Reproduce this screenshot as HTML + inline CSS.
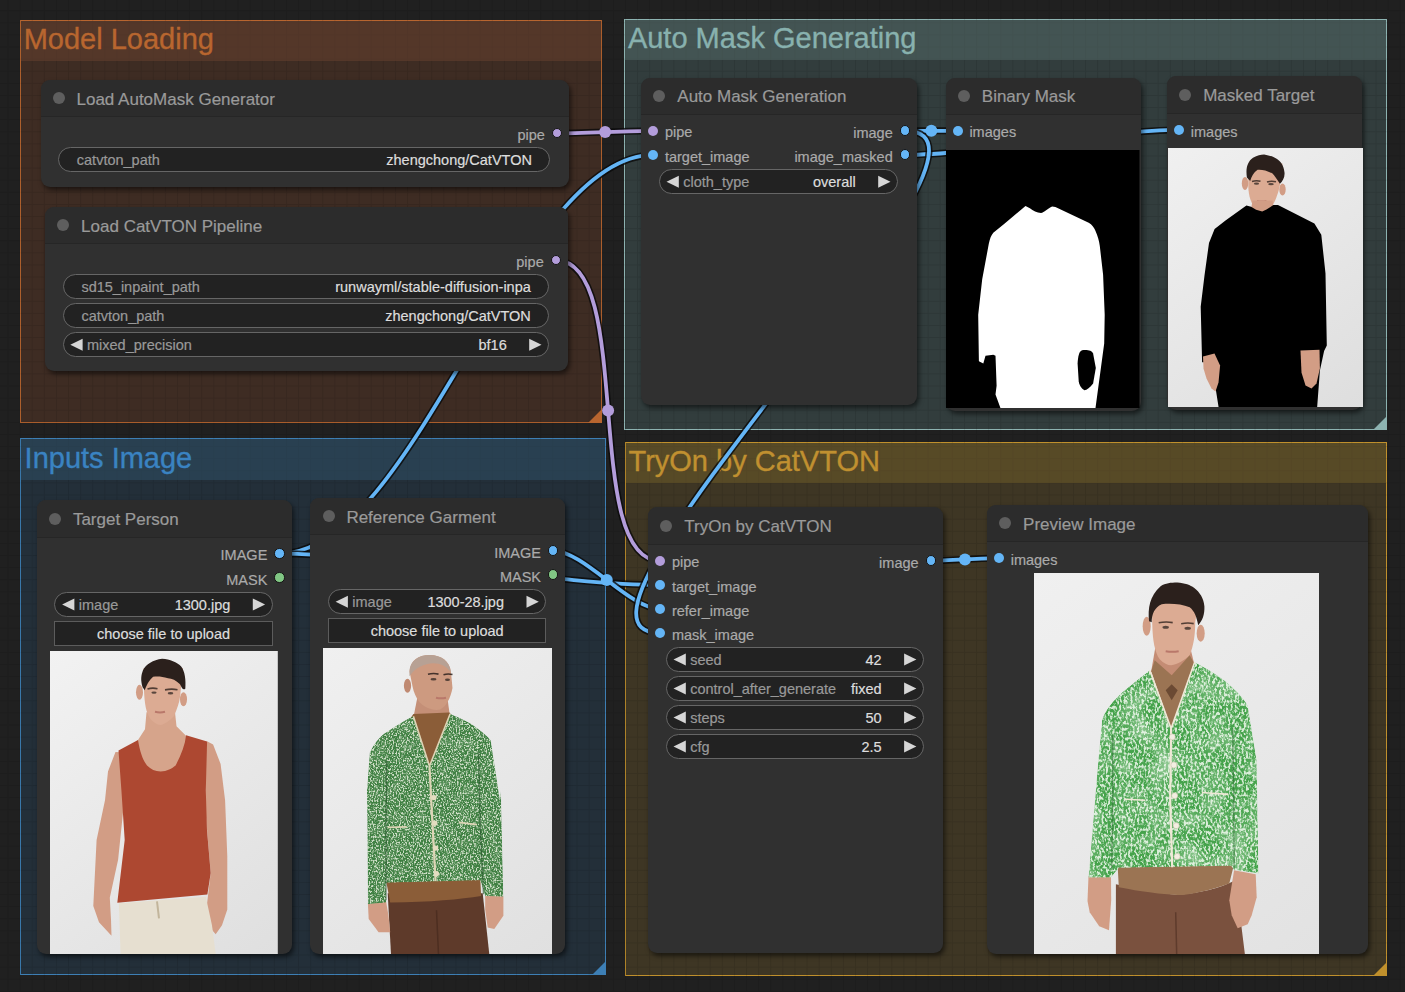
<!DOCTYPE html><html><head><meta charset="utf-8"><style>
html,body{margin:0;padding:0}
body{width:1405px;height:992px;overflow:hidden;background:#202020;position:relative;font-family:"Liberation Sans",sans-serif}
.t{position:absolute;white-space:nowrap;line-height:1}
.abs{position:absolute}
.grp{position:absolute;box-sizing:border-box}
.node{position:absolute;border-radius:9px;background:#303030;box-shadow:2px 3px 5px rgba(0,0,0,0.55);overflow:hidden}
.tbar{position:absolute;left:0;right:0;top:0;background:#2c2c2c;border-bottom:1px solid #262626}
.dot{position:absolute;border-radius:50%}
.w{position:absolute;box-sizing:border-box;background:#222;border:1px solid #666;border-radius:13px}
.btn{position:absolute;box-sizing:border-box;background:#222;border:1px solid #5c5c5c}

</style></head><body>
<div class="grp" style="left:20px;top:20px;width:582px;height:403px;border:1px solid #b8652f;background:#3e2c23"></div>
<div class="abs" style="left:21px;top:21px;width:580px;height:40px;background:#54382a"></div>
<div class="grp" style="left:624px;top:19px;width:763px;height:411px;border:1px solid #8db3b1;background:#323d3d"></div>
<div class="abs" style="left:625px;top:20px;width:761px;height:40px;background:#445453"></div>
<div class="grp" style="left:20px;top:438px;width:586px;height:537px;border:1px solid #3d7fb5;background:#232f39"></div>
<div class="abs" style="left:21px;top:439px;width:584px;height:41px;background:#2a4151"></div>
<div class="grp" style="left:625px;top:442px;width:762px;height:534px;border:1px solid #c0902c;background:#3e3624"></div>
<div class="abs" style="left:626px;top:443px;width:760px;height:40px;background:#574a27"></div>
<svg class="abs" style="left:0;top:0" width="1405" height="992"><defs><pattern id="g" patternUnits="userSpaceOnUse" x="7.5" y="10.2" width="12.107" height="12.107"><rect x="0" y="0" width="1" height="12.107" fill="rgba(0,0,0,0.10)"/><rect x="1" y="0" width="11.107" height="1" fill="rgba(0,0,0,0.10)"/></pattern></defs><rect width="1405" height="992" fill="url(#g)"/></svg>
<div class="abs" style="left:21px;top:21px;width:580px;height:40px;background:#54382a;opacity:0.65"></div>
<svg class="abs" style="left:588px;top:409px" width="14" height="14"><polygon points="14,0 14,14 0,14" fill="#b8652f"/></svg>
<div class="t" style="left:23.70px;top:24.95px;font-size:29px;color:#b8662f;-webkit-text-stroke:0.35px #b8662f">Model Loading</div>
<div class="abs" style="left:625px;top:20px;width:761px;height:40px;background:#445453;opacity:0.65"></div>
<svg class="abs" style="left:1373px;top:416px" width="14" height="14"><polygon points="14,0 14,14 0,14" fill="#8db3b1"/></svg>
<div class="t" style="left:627.90px;top:24.05px;font-size:29px;color:#88b1ae;-webkit-text-stroke:0.35px #88b1ae">Auto Mask Generating</div>
<div class="abs" style="left:21px;top:439px;width:584px;height:41px;background:#2a4151;opacity:0.65"></div>
<svg class="abs" style="left:592px;top:961px" width="14" height="14"><polygon points="14,0 14,14 0,14" fill="#3d7fb5"/></svg>
<div class="t" style="left:24.60px;top:444.25px;font-size:29px;color:#3a83c2;-webkit-text-stroke:0.35px #3a83c2">Inputs Image</div>
<div class="abs" style="left:626px;top:443px;width:760px;height:40px;background:#574a27;opacity:0.65"></div>
<svg class="abs" style="left:1373px;top:962px" width="14" height="14"><polygon points="14,0 14,14 0,14" fill="#c0902c"/></svg>
<div class="t" style="left:628.50px;top:446.95px;font-size:29px;color:#c09030;-webkit-text-stroke:0.35px #c09030">TryOn by CatVTON</div>
<svg class="abs" style="left:0;top:0" width="1405" height="992"><path d="M557.20,133.40 C581.18,133.40 629.12,130.80 653.10,130.80" fill="none" stroke="rgba(10,10,10,0.8)" stroke-width="7"/><path d="M557.20,133.40 C581.18,133.40 629.12,130.80 653.10,130.80" fill="none" stroke="#b39ddb" stroke-width="3.8"/><path d="M556.10,260.40 C635.57,260.40 580.63,560.80 660.10,560.80" fill="none" stroke="rgba(10,10,10,0.8)" stroke-width="7"/><path d="M556.10,260.40 C635.57,260.40 580.63,560.80 660.10,560.80" fill="none" stroke="#b39ddb" stroke-width="3.8"/><path d="M279.70,553.70 C416.28,553.70 516.52,154.90 653.10,154.90" fill="none" stroke="rgba(10,10,10,0.8)" stroke-width="7"/><path d="M279.70,553.70 C416.28,553.70 516.52,154.90 653.10,154.90" fill="none" stroke="#64b5f6" stroke-width="3.8"/><path d="M279.70,553.70 C375.12,553.70 564.68,584.90 660.10,584.90" fill="none" stroke="rgba(10,10,10,0.8)" stroke-width="7"/><path d="M279.70,553.70 C375.12,553.70 564.68,584.90 660.10,584.90" fill="none" stroke="#64b5f6" stroke-width="3.8"/><path d="M553.40,550.80 C583.79,550.80 629.71,609.00 660.10,609.00" fill="none" stroke="rgba(10,10,10,0.8)" stroke-width="7"/><path d="M553.40,550.80 C583.79,550.80 629.71,609.00 660.10,609.00" fill="none" stroke="#64b5f6" stroke-width="3.8"/><path d="M905.10,130.80 C918.23,130.80 944.47,130.80 957.60,130.80" fill="none" stroke="rgba(10,10,10,0.8)" stroke-width="7"/><path d="M905.10,130.80 C918.23,130.80 944.47,130.80 957.60,130.80" fill="none" stroke="#64b5f6" stroke-width="3.8"/><path d="M905.10,154.90 C973.86,154.90 1110.24,129.90 1179.00,129.90" fill="none" stroke="rgba(10,10,10,0.8)" stroke-width="7"/><path d="M905.10,154.90 C973.86,154.90 1110.24,129.90 1179.00,129.90" fill="none" stroke="#64b5f6" stroke-width="3.8"/><path d="M905.10,130.80 C1044.82,130.80 520.38,633.10 660.10,633.10" fill="none" stroke="rgba(10,10,10,0.8)" stroke-width="7"/><path d="M905.10,130.80 C1044.82,130.80 520.38,633.10 660.10,633.10" fill="none" stroke="#64b5f6" stroke-width="3.8"/><path d="M931.00,560.80 C947.99,560.80 981.91,558.10 998.90,558.10" fill="none" stroke="rgba(10,10,10,0.8)" stroke-width="7"/><path d="M931.00,560.80 C947.99,560.80 981.91,558.10 998.90,558.10" fill="none" stroke="#64b5f6" stroke-width="3.8"/><circle cx="605.15" cy="132.10" r="6" fill="#b39ddb"/><circle cx="608.10" cy="410.60" r="6" fill="#b39ddb"/><circle cx="466.40" cy="354.30" r="6" fill="#64b5f6"/><circle cx="469.90" cy="569.30" r="6" fill="#64b5f6"/><circle cx="606.75" cy="579.90" r="6" fill="#64b5f6"/><circle cx="931.35" cy="130.80" r="6" fill="#64b5f6"/><circle cx="1042.05" cy="142.40" r="6" fill="#64b5f6"/><circle cx="782.60" cy="381.95" r="6" fill="#64b5f6"/><circle cx="964.95" cy="559.45" r="6" fill="#64b5f6"/></svg>
<div class="node" style="left:40.50px;top:80.10px;width:528.80px;height:106.50px"><div class="tbar" style="height:36.30px"></div><div class="dot" style="left:12.20px;top:12.40px;width:12px;height:12px;background:#5e5e5e"></div></div><div class="t" style="left:76.50px;top:90.91px;font-size:17px;color:#9a9a9a;-webkit-text-stroke:0.2px #9a9a9a">Load AutoMask Generator</div>
<div class="dot" style="left:551.70px;top:127.90px;width:8.4px;height:8.4px;background:#b39ddb;border:1.3px solid #151515"></div><div class="t" style="right:860.20px;top:128.13px;font-size:14.5px;color:#aaaaaa;-webkit-text-stroke:0.2px #aaaaaa">pipe</div>
<div class="w" style="left:57.90px;top:147.10px;width:492.40px;height:24.6px"></div><div class="t" style="left:76.80px;top:152.53px;font-size:14.5px;color:#999999;-webkit-text-stroke:0.2px #999999">catvton_path</div><div class="t" style="right:873.10px;top:152.53px;font-size:14.5px;color:#dddddd;-webkit-text-stroke:0.2px #dddddd">zhengchong/CatVTON</div>
<div class="node" style="left:45.10px;top:207.10px;width:523.10px;height:163.90px"><div class="tbar" style="height:36.30px"></div><div class="dot" style="left:12.20px;top:12.40px;width:12px;height:12px;background:#5e5e5e"></div></div><div class="t" style="left:81.10px;top:217.91px;font-size:17px;color:#9a9a9a;-webkit-text-stroke:0.2px #9a9a9a">Load CatVTON Pipeline</div>
<div class="dot" style="left:550.60px;top:254.90px;width:8.4px;height:8.4px;background:#b39ddb;border:1.3px solid #151515"></div><div class="t" style="right:861.30px;top:255.13px;font-size:14.5px;color:#aaaaaa;-webkit-text-stroke:0.2px #aaaaaa">pipe</div>
<div class="w" style="left:62.50px;top:274.30px;width:486.70px;height:24.6px"></div><div class="t" style="left:81.40px;top:279.73px;font-size:14.5px;color:#999999;-webkit-text-stroke:0.2px #999999">sd15_inpaint_path</div><div class="t" style="right:874.20px;top:279.73px;font-size:14.5px;color:#dddddd;-webkit-text-stroke:0.2px #dddddd">runwayml/stable-diffusion-inpa</div>
<div class="w" style="left:62.50px;top:303.30px;width:486.70px;height:24.6px"></div><div class="t" style="left:81.40px;top:308.73px;font-size:14.5px;color:#999999;-webkit-text-stroke:0.2px #999999">catvton_path</div><div class="t" style="right:874.20px;top:308.73px;font-size:14.5px;color:#dddddd;-webkit-text-stroke:0.2px #dddddd">zhengchong/CatVTON</div>
<div class="w" style="left:62.50px;top:332.40px;width:486.70px;height:24.6px"></div><svg class="abs" style="left:0;top:0;overflow:visible" width="1" height="1"><polygon points="82.60,338.70 70.30,344.70 82.60,350.70" fill="#d6d6d6"/><polygon points="529.20,338.70 541.50,344.70 529.20,350.70" fill="#d6d6d6"/></svg><div class="t" style="left:87.00px;top:337.83px;font-size:14.5px;color:#999999;-webkit-text-stroke:0.2px #999999">mixed_precision</div><div class="t" style="right:898.30px;top:337.83px;font-size:14.5px;color:#dddddd;-webkit-text-stroke:0.2px #dddddd">bf16</div>
<div class="node" style="left:641.30px;top:77.60px;width:275.90px;height:327.40px"><div class="tbar" style="height:36.20px"></div><div class="dot" style="left:12.20px;top:12.35px;width:12px;height:12px;background:#5e5e5e"></div></div><div class="t" style="left:677.30px;top:88.41px;font-size:17px;color:#9a9a9a;-webkit-text-stroke:0.2px #9a9a9a">Auto Mask Generation</div>
<div class="dot" style="left:648.10px;top:125.80px;width:10px;height:10px;background:#b39ddb"></div><div class="t" style="left:664.90px;top:125.43px;font-size:14.5px;color:#aaaaaa;-webkit-text-stroke:0.2px #aaaaaa">pipe</div>
<div class="dot" style="left:648.10px;top:149.90px;width:10px;height:10px;background:#64b5f6"></div><div class="t" style="left:664.90px;top:149.53px;font-size:14.5px;color:#aaaaaa;-webkit-text-stroke:0.2px #aaaaaa">target_image</div>
<div class="dot" style="left:899.60px;top:125.30px;width:8.4px;height:8.4px;background:#64b5f6;border:1.3px solid #151515"></div><div class="t" style="right:512.30px;top:125.53px;font-size:14.5px;color:#aaaaaa;-webkit-text-stroke:0.2px #aaaaaa">image</div>
<div class="dot" style="left:899.60px;top:149.40px;width:8.4px;height:8.4px;background:#64b5f6;border:1.3px solid #151515"></div><div class="t" style="right:512.30px;top:149.63px;font-size:14.5px;color:#aaaaaa;-webkit-text-stroke:0.2px #aaaaaa">image_masked</div>
<div class="w" style="left:658.70px;top:169.40px;width:239.50px;height:24.6px"></div><svg class="abs" style="left:0;top:0;overflow:visible" width="1" height="1"><polygon points="678.80,175.70 666.50,181.70 678.80,187.70" fill="#d6d6d6"/><polygon points="878.20,175.70 890.50,181.70 878.20,187.70" fill="#d6d6d6"/></svg><div class="t" style="left:683.20px;top:174.83px;font-size:14.5px;color:#999999;-webkit-text-stroke:0.2px #999999">cloth_type</div><div class="t" style="right:549.30px;top:174.83px;font-size:14.5px;color:#dddddd;-webkit-text-stroke:0.2px #dddddd">overall</div>
<div class="node" style="left:945.80px;top:77.60px;width:195.20px;height:333.90px"><div class="tbar" style="height:36.20px"></div><div class="dot" style="left:12.20px;top:12.35px;width:12px;height:12px;background:#5e5e5e"></div></div><div class="t" style="left:981.80px;top:88.41px;font-size:17px;color:#9a9a9a;-webkit-text-stroke:0.2px #9a9a9a">Binary Mask</div>
<div class="dot" style="left:952.60px;top:125.80px;width:10px;height:10px;background:#64b5f6"></div><div class="t" style="left:969.40px;top:125.43px;font-size:14.5px;color:#aaaaaa;-webkit-text-stroke:0.2px #aaaaaa">images</div>
<svg class="abs" style="left:946.00px;top:149.50px" width="193.50" height="258.50" viewBox="946.0 149.5 193.5 258.5"><defs></defs><rect x="946.0" y="149.5" width="193.5" height="258.5" fill="#000"/><path d="M1025.5,205.5 L1029.9,207.8 C1033,210 1037,212.6 1041,212.6 C1044,212 1048,208 1052.1,206 L1055.4,206.6 L1088.7,222.2 C1092,224 1094,227 1095.3,230 C1098,236 1099,240 1099.8,245.5 L1103.1,274.3 L1104.7,314.3 L1104.2,343.1 L1100.9,367.5 L1095.3,409 L1001,409 L995.5,394.1 L996.6,385.3 L995.5,355.3 L993.3,354.2 L985.5,355.3 L983.3,363.1 L978.9,360.8 L978.2,314.3 L982.2,278.8 L988.8,243.3 C990,238 991,235 993.3,232.2 L1004.4,223.3 Z" fill="#fff"/><path d="M1082,349.8 C1087,349 1092,350 1093.1,353.1 L1095.8,367.5 L1093.1,383 C1090,387 1087,389.7 1084.3,389.7 C1081,388 1079,384 1078.7,380.8 L1077.6,363.1 C1078,356 1079,351 1082,349.8 Z" fill="#000"/></svg>
<div class="node" style="left:1167.20px;top:76.10px;width:195.30px;height:333.90px"><div class="tbar" style="height:36.80px"></div><div class="dot" style="left:12.20px;top:12.65px;width:12px;height:12px;background:#5e5e5e"></div></div><div class="t" style="left:1203.20px;top:86.91px;font-size:17px;color:#9a9a9a;-webkit-text-stroke:0.2px #9a9a9a">Masked Target</div>
<div class="dot" style="left:1174.00px;top:124.90px;width:10px;height:10px;background:#64b5f6"></div><div class="t" style="left:1190.80px;top:124.53px;font-size:14.5px;color:#aaaaaa;-webkit-text-stroke:0.2px #aaaaaa">images</div>
<svg class="abs" style="left:1167.50px;top:147.60px" width="195.00" height="259.40" viewBox="1167.5 147.6 195.0 259.4"><defs><linearGradient id="bgE" gradientUnits="userSpaceOnUse" x1="1167.5" y1="147.6" x2="1362.5" y2="407.0"><stop offset="0" stop-color="#f0f0f0"/><stop offset="1" stop-color="#dedede"/></linearGradient></defs><rect x="1167.5" y="147.6" width="195.0" height="259.4" fill="url(#bgE)"/><ellipse cx="1244.5" cy="183" rx="3.2" ry="6.5" fill="#d29d85"/><ellipse cx="1282" cy="189" rx="3.2" ry="6" fill="#d29d85"/><path d="M1247.5,163 L1247.8,186 C1248,196 1251,204 1255,207.5 C1257,209 1258,209.7 1259.5,209.7 C1265,208 1270,206 1272.9,203.7 C1276,197 1278,192 1279.5,184 L1282,163 Z" fill="#dcab93"/><path d="M1246.4,177 C1245,168 1247,161 1252.5,157.3 C1257,155 1260,154 1263.6,154 C1269,155 1273,156 1275.7,158.2 C1280,161 1283,164 1284,172 C1284.5,177 1282,181 1279.4,183.3 C1276,178 1274,175 1272,173 C1266,170 1262,169 1257.1,169.3 C1253,172 1251,176 1249.7,180.5 Z" fill="#2b201c"/><path d="M1251.5,181.1 Q1255.75,179.7 1260,180.9" stroke="#3a2a24" stroke-width="1.6" fill="none" opacity="0.85"/><path d="M1266.5,181.6 Q1271.0,180.2 1275.5,181.4" stroke="#3a2a24" stroke-width="1.6" fill="none" opacity="0.85"/><ellipse cx="1256" cy="183.3" rx="2.6" ry="1.1" fill="#2e2420" opacity="0.75"/><ellipse cx="1270.5" cy="183.8" rx="2.8" ry="1.1" fill="#2e2420" opacity="0.75"/><path d="M1256.5,200.5 Q1261.25,201.7 1266,200.5" stroke="#b9786a" stroke-width="2" fill="none"/><path d="M1252,200 L1272,200 L1274,212 L1250,212 Z" fill="#d29d85"/><path d="M1245.9,205.2 L1250.6,206.4 L1255.6,209.3 L1261.7,211.1 L1266,209 L1272.9,204.6 L1277.5,204.6 L1313.9,223.2 L1320.8,234.3 L1325,273.1 L1326.3,345.2 L1323.6,350.7 L1319.4,370.1 L1316.6,407.5 L1218.2,407.5 L1215.4,389.5 L1212.7,361.8 L1201.6,361.8 L1200.2,306.3 L1204,275 L1208.5,242.6 L1214.1,228.7 L1225,220 Z" fill="#000"/><path d="M1202.5,356 L1214,353 L1219.6,365 L1218,382 L1215,391 L1211,388 L1206,378 L1203,368 Z" fill="#d29d85"/><path d="M1300,350 L1319,349.3 L1319.4,368 L1316,383 L1311,388.1 L1305,385 L1301,372 Z" fill="#d29d85"/></svg>
<div class="node" style="left:36.90px;top:500.10px;width:254.90px;height:453.60px"><div class="tbar" style="height:36.60px"></div><div class="dot" style="left:12.20px;top:12.55px;width:12px;height:12px;background:#5e5e5e"></div></div><div class="t" style="left:72.90px;top:510.91px;font-size:17px;color:#9a9a9a;-webkit-text-stroke:0.2px #9a9a9a">Target Person</div>
<div class="dot" style="left:274.20px;top:548.20px;width:8.4px;height:8.4px;background:#64b5f6;border:1.3px solid #151515"></div><div class="t" style="right:1137.70px;top:548.43px;font-size:14.5px;color:#aaaaaa;-webkit-text-stroke:0.2px #aaaaaa">IMAGE</div>
<div class="dot" style="left:274.20px;top:572.30px;width:8.4px;height:8.4px;background:#81c784;border:1.3px solid #151515"></div><div class="t" style="right:1137.70px;top:572.53px;font-size:14.5px;color:#aaaaaa;-webkit-text-stroke:0.2px #aaaaaa">MASK</div>
<div class="w" style="left:54.30px;top:592.20px;width:218.50px;height:24.6px"></div><svg class="abs" style="left:0;top:0;overflow:visible" width="1" height="1"><polygon points="74.40,598.50 62.10,604.50 74.40,610.50" fill="#d6d6d6"/><polygon points="252.80,598.50 265.10,604.50 252.80,610.50" fill="#d6d6d6"/></svg><div class="t" style="left:78.80px;top:597.63px;font-size:14.5px;color:#999999;-webkit-text-stroke:0.2px #999999">image</div><div class="t" style="right:1174.70px;top:597.63px;font-size:14.5px;color:#dddddd;-webkit-text-stroke:0.2px #dddddd">1300.jpg</div>
<div class="btn" style="left:54.30px;top:621.30px;width:218.50px;height:24.4px"></div><div class="t" style="left:-136.45px;width:600px;text-align:center;top:626.73px;font-size:14.5px;color:#dddddd;-webkit-text-stroke:0.2px #dddddd">choose file to upload</div>
<svg class="abs" style="left:50.00px;top:650.70px" width="227.80" height="303.30" viewBox="50.0 650.7 227.8 303.29999999999995"><defs><linearGradient id="bgF" gradientUnits="userSpaceOnUse" x1="50.0" y1="650.7" x2="277.8" y2="954.0"><stop offset="0" stop-color="#f2f2f2"/><stop offset="1" stop-color="#dfdfdf"/></linearGradient></defs><rect x="50.0" y="650.7" width="227.8" height="303.29999999999995" fill="url(#bgF)"/><path d="M115.5,751.6 L108,771.1 L105,800 L96.6,839.6 L93.3,905.8 L99,922 L111.5,935.5 L111,919 L109.8,897.5 L118.1,859.5 L123.1,811.5 L124,770 L121,752 Z" fill="#d29d85"/><path d="M207,741 L213.1,744.1 L220.6,763.6 L225.1,800 L227.3,856.1 L227.3,909.1 L222,925 L215.7,933.9 L208,925 L205.8,914 L210.7,872.7 L205.8,814.8 L205,760 Z" fill="#d29d85"/><path d="M146.5,712 L175,712 L176.5,726 L187,736.5 L182,778 L160.6,780 L140,775 L137.5,740.5 L145,729 Z" fill="#d6a48b"/><ellipse cx="139.5" cy="692" rx="3.5" ry="7.5" fill="#d29d85"/><ellipse cx="183.5" cy="699" rx="3.5" ry="7" fill="#d29d85"/><path d="M143.5,668 L144,690 C144.5,703 146,712 150,718 C153,722 157,724.6 160.6,724.6 C166,723.5 171,719 174.1,715.6 C177,709 179.5,702 180.1,696 L183,668 Z" fill="#dcab93"/><path d="M142.6,687 C140.5,680 141,675 143,670 C146,664 153,659.5 162.1,658.5 C170,659 177,662 181,666 C185,671 186,680 185.3,688.5 C183,690 182,688 180,684 C176,680 172,678 168,678 C162,676 157,676 153.1,676.5 C149,680 146,686 144.8,690 Z" fill="#2b201c"/><path d="M147.5,688.6 Q152.5,687.2 157.5,688.4" stroke="#3a2a24" stroke-width="1.6" fill="none" opacity="0.85"/><path d="M165,689.6 Q171.25,688.2 177.5,689.4" stroke="#3a2a24" stroke-width="1.6" fill="none" opacity="0.85"/><ellipse cx="154" cy="692.3" rx="2.6" ry="1.2" fill="#2e2420" opacity="0.75"/><ellipse cx="170.5" cy="693" rx="2.8" ry="1.2" fill="#2e2420" opacity="0.75"/><path d="M155,711.5 Q160.0,712.7 165,711.5" stroke="#b9786a" stroke-width="2" fill="none"/><path d="M118.5,750.1 L138,739.6 C140,752 143,760 147,765.1 C151,769 155,771 160.6,771.1 C167,771 172,768 175.6,765.1 C181,755 185,745 186.1,735 L207.1,741.1 L205.8,790 L207,830 L210.7,872.7 L207.4,894.2 L117.3,902.5 L124.7,839.6 L121.4,790 Z" fill="#ad4831"/><path d="M118.9,903 L205.8,896.5 L212,925 L215.7,954 L120.6,954 Z" fill="#e6dfd0"/><path d="M157,901 L159,918" stroke="#c2b59b" stroke-width="2" fill="none"/></svg>
<div class="node" style="left:310.40px;top:498.10px;width:255.10px;height:455.80px"><div class="tbar" style="height:35.70px"></div><div class="dot" style="left:12.20px;top:12.10px;width:12px;height:12px;background:#5e5e5e"></div></div><div class="t" style="left:346.40px;top:508.91px;font-size:17px;color:#9a9a9a;-webkit-text-stroke:0.2px #9a9a9a">Reference Garment</div>
<div class="dot" style="left:547.90px;top:545.30px;width:8.4px;height:8.4px;background:#64b5f6;border:1.3px solid #151515"></div><div class="t" style="right:864.00px;top:545.53px;font-size:14.5px;color:#aaaaaa;-webkit-text-stroke:0.2px #aaaaaa">IMAGE</div>
<div class="dot" style="left:547.90px;top:569.40px;width:8.4px;height:8.4px;background:#81c784;border:1.3px solid #151515"></div><div class="t" style="right:864.00px;top:569.63px;font-size:14.5px;color:#aaaaaa;-webkit-text-stroke:0.2px #aaaaaa">MASK</div>
<div class="w" style="left:327.80px;top:589.40px;width:218.70px;height:24.6px"></div><svg class="abs" style="left:0;top:0;overflow:visible" width="1" height="1"><polygon points="347.90,595.70 335.60,601.70 347.90,607.70" fill="#d6d6d6"/><polygon points="526.50,595.70 538.80,601.70 526.50,607.70" fill="#d6d6d6"/></svg><div class="t" style="left:352.30px;top:594.83px;font-size:14.5px;color:#999999;-webkit-text-stroke:0.2px #999999">image</div><div class="t" style="right:901.00px;top:594.83px;font-size:14.5px;color:#dddddd;-webkit-text-stroke:0.2px #dddddd">1300-28.jpg</div>
<div class="btn" style="left:327.80px;top:618.40px;width:218.70px;height:24.4px"></div><div class="t" style="left:137.15px;width:600px;text-align:center;top:623.83px;font-size:14.5px;color:#dddddd;-webkit-text-stroke:0.2px #dddddd">choose file to upload</div>
<svg class="abs" style="left:322.50px;top:647.80px" width="229.70" height="306.20" viewBox="322.5 647.8 229.70000000000005 306.20000000000005"><defs><linearGradient id="bgG" gradientUnits="userSpaceOnUse" x1="322.5" y1="647.8" x2="552.2" y2="954.0"><stop offset="0" stop-color="#f0f0f0"/><stop offset="1" stop-color="#e0e0e0"/></linearGradient><filter id="fG" x="0" y="0" width="100%" height="100%"><feTurbulence type="fractalNoise" baseFrequency="0.7 0.55" numOctaves="2" seed="3"/><feColorMatrix type="matrix" values="0 0 0 0 0.88  0 0 0 0 0.92  0 0 0 0 0.8  4.5 0 0 0 -2.05"/></filter><filter id="sG" x="0" y="0" width="100%" height="100%"><feTurbulence type="fractalNoise" baseFrequency="0.08" numOctaves="2" seed="8"/><feColorMatrix type="matrix" values="0 0 0 0 0.88  0 0 0 0 0.92  0 0 0 0 0.8  2.0 0 0 0 -0.9"/></filter><clipPath id="cG"><path d="M412.9,716 L429,766 L449.7,713.5 C460,718 470,722 476.5,727.7 C484,733 488,737 490.3,740 L499.5,800 L500.4,790 L502.9,896.6 L484.7,895.8 L479.8,880.1 L385.5,882.6 L385.5,902.4 L367.4,904 L366.5,790 L369.2,752.2 C373,744 378,738 383,733.8 C395,726 404,720 412.9,716 Z"/></clipPath></defs><rect x="322.5" y="647.8" width="229.70000000000005" height="306.20000000000005" fill="url(#bgG)"/><path d="M387.2,893 L482.2,893 L488.8,954 L390.5,954 Z" fill="#5e3a2a"/><path d="M436,910 L438,954" stroke="#4d2e21" stroke-width="1.5"/><path d="M385.5,880 L479.8,878 L480.6,895.8 C460,899 430,902 389.7,902.4 Z" fill="#8b5d38"/><path d="M367.4,903 L385.5,901 L388,915.6 L389.7,932.1 L378.1,932.1 L368.2,918.9 Z" fill="#d29d85"/><path d="M484.7,895 L502.9,896 L502.9,915.6 L493.8,928.8 L487.2,927.2 L484.7,909 Z" fill="#d29d85"/><path d="M416.7,698 L447,698 L448.9,712.4 L429,740 L413.6,713.9 Z" fill="#c48f77"/><ellipse cx="407" cy="685.5" rx="3.6" ry="7" fill="#c08a72"/><path d="M409,671 C410,660 418,654.9 429,654.9 C441,655 449,661 450.4,671 L452,687.8 C450,698 446,706 439.7,709.3 C432,711 424,707 419,702 C416,698 413,692 412,686 Z" fill="#cd9a80"/><path d="M409,672 C409,661 418,654.9 429,654.9 C441,655 449,661 450.4,672 C446,666 440,663 433,663 C424,663 414,668 409,676 Z" fill="#b7a194"/><path d="M427.5,674.1 Q432.75,672.7 438,673.9" stroke="#2a201c" stroke-width="1.6" fill="none" opacity="0.85"/><path d="M443,674.6 Q447.5,673.2 452,674.4" stroke="#2a201c" stroke-width="1.6" fill="none" opacity="0.85"/><ellipse cx="433" cy="679" rx="3" ry="1.2" fill="#2e2420" opacity="0.75"/><ellipse cx="447" cy="679.5" rx="2.5" ry="1.2" fill="#2e2420" opacity="0.75"/><path d="M435.5,697.5 Q440.5,698.7 445.5,697.5" stroke="#b9786a" stroke-width="2" fill="none"/><path d="M412.9,713.9 L448.9,712.4 L452,716 L429,766 L410,718 Z" fill="#8b5d38"/><g clip-path="url(#cG)"><path d="M412.9,716 L429,766 L449.7,713.5 C460,718 470,722 476.5,727.7 C484,733 488,737 490.3,740 L499.5,800 L500.4,790 L502.9,896.6 L484.7,895.8 L479.8,880.1 L385.5,882.6 L385.5,902.4 L367.4,904 L366.5,790 L369.2,752.2 C373,744 378,738 383,733.8 C395,726 404,720 412.9,716 Z" fill="#3f8042"/><rect x="322.5" y="647.8" width="229.70000000000005" height="306.20000000000005" filter="url(#sG)" opacity="0.2"/><rect x="322.5" y="647.8" width="229.70000000000005" height="306.20000000000005" filter="url(#fG)" opacity="0.8"/></g><path d="M412.9,716 L429,766 L449.7,713.5" stroke="#ddd5b6" stroke-width="1.6" fill="none"/><path d="M386,760 L385.5,830 L385.5,900 M478,752 L480,830 L483,894" stroke="#24502a" stroke-width="1.3" fill="none" opacity="0.6"/><path d="M429,766 L430.2,790 L435.1,880.9" stroke="#ddd5b6" stroke-width="2.2" fill="none"/><circle cx="433.5" cy="797.4" r="2.6" fill="#e3dcc0"/><circle cx="434.3" cy="823" r="2.6" fill="#e3dcc0"/><circle cx="435.1" cy="847.9" r="2.6" fill="#e3dcc0"/><circle cx="436" cy="873.5" r="2.6" fill="#e3dcc0"/><path d="M387.2,827.2 L406.2,826.7 M458.3,822.2 L476.4,824.4" stroke="#ddd5b6" stroke-width="1.6" fill="none"/></svg>
<div class="node" style="left:648.30px;top:507.10px;width:294.80px;height:445.60px"><div class="tbar" style="height:36.70px"></div><div class="dot" style="left:12.20px;top:12.60px;width:12px;height:12px;background:#5e5e5e"></div></div><div class="t" style="left:684.30px;top:517.91px;font-size:17px;color:#9a9a9a;-webkit-text-stroke:0.2px #9a9a9a">TryOn by CatVTON</div>
<div class="dot" style="left:655.10px;top:555.80px;width:10px;height:10px;background:#b39ddb"></div><div class="t" style="left:671.90px;top:555.43px;font-size:14.5px;color:#aaaaaa;-webkit-text-stroke:0.2px #aaaaaa">pipe</div>
<div class="dot" style="left:655.10px;top:579.90px;width:10px;height:10px;background:#64b5f6"></div><div class="t" style="left:671.90px;top:579.53px;font-size:14.5px;color:#aaaaaa;-webkit-text-stroke:0.2px #aaaaaa">target_image</div>
<div class="dot" style="left:655.10px;top:604.00px;width:10px;height:10px;background:#64b5f6"></div><div class="t" style="left:671.90px;top:603.63px;font-size:14.5px;color:#aaaaaa;-webkit-text-stroke:0.2px #aaaaaa">refer_image</div>
<div class="dot" style="left:655.10px;top:628.10px;width:10px;height:10px;background:#64b5f6"></div><div class="t" style="left:671.90px;top:627.73px;font-size:14.5px;color:#aaaaaa;-webkit-text-stroke:0.2px #aaaaaa">mask_image</div>
<div class="dot" style="left:925.50px;top:555.30px;width:8.4px;height:8.4px;background:#64b5f6;border:1.3px solid #151515"></div><div class="t" style="right:486.40px;top:555.53px;font-size:14.5px;color:#aaaaaa;-webkit-text-stroke:0.2px #aaaaaa">image</div>
<div class="w" style="left:665.70px;top:647.10px;width:258.40px;height:24.6px"></div><svg class="abs" style="left:0;top:0;overflow:visible" width="1" height="1"><polygon points="685.80,653.40 673.50,659.40 685.80,665.40" fill="#d6d6d6"/><polygon points="904.10,653.40 916.40,659.40 904.10,665.40" fill="#d6d6d6"/></svg><div class="t" style="left:690.20px;top:652.53px;font-size:14.5px;color:#999999;-webkit-text-stroke:0.2px #999999">seed</div><div class="t" style="right:523.40px;top:652.53px;font-size:14.5px;color:#dddddd;-webkit-text-stroke:0.2px #dddddd">42</div>
<div class="w" style="left:665.70px;top:676.14px;width:258.40px;height:24.6px"></div><svg class="abs" style="left:0;top:0;overflow:visible" width="1" height="1"><polygon points="685.80,682.44 673.50,688.44 685.80,694.44" fill="#d6d6d6"/><polygon points="904.10,682.44 916.40,688.44 904.10,694.44" fill="#d6d6d6"/></svg><div class="t" style="left:690.20px;top:681.57px;font-size:14.5px;color:#999999;-webkit-text-stroke:0.2px #999999">control_after_generate</div><div class="t" style="right:523.40px;top:681.57px;font-size:14.5px;color:#dddddd;-webkit-text-stroke:0.2px #dddddd">fixed</div>
<div class="w" style="left:665.70px;top:705.18px;width:258.40px;height:24.6px"></div><svg class="abs" style="left:0;top:0;overflow:visible" width="1" height="1"><polygon points="685.80,711.48 673.50,717.48 685.80,723.48" fill="#d6d6d6"/><polygon points="904.10,711.48 916.40,717.48 904.10,723.48" fill="#d6d6d6"/></svg><div class="t" style="left:690.20px;top:710.61px;font-size:14.5px;color:#999999;-webkit-text-stroke:0.2px #999999">steps</div><div class="t" style="right:523.40px;top:710.61px;font-size:14.5px;color:#dddddd;-webkit-text-stroke:0.2px #dddddd">50</div>
<div class="w" style="left:665.70px;top:734.22px;width:258.40px;height:24.6px"></div><svg class="abs" style="left:0;top:0;overflow:visible" width="1" height="1"><polygon points="685.80,740.52 673.50,746.52 685.80,752.52" fill="#d6d6d6"/><polygon points="904.10,740.52 916.40,746.52 904.10,752.52" fill="#d6d6d6"/></svg><div class="t" style="left:690.20px;top:739.65px;font-size:14.5px;color:#999999;-webkit-text-stroke:0.2px #999999">cfg</div><div class="t" style="right:523.40px;top:739.65px;font-size:14.5px;color:#dddddd;-webkit-text-stroke:0.2px #dddddd">2.5</div>
<div class="node" style="left:987.10px;top:505.10px;width:380.90px;height:448.70px"><div class="tbar" style="height:36.00px"></div><div class="dot" style="left:12.20px;top:12.25px;width:12px;height:12px;background:#5e5e5e"></div></div><div class="t" style="left:1023.10px;top:515.91px;font-size:17px;color:#9a9a9a;-webkit-text-stroke:0.2px #9a9a9a">Preview Image</div>
<div class="dot" style="left:993.90px;top:553.10px;width:10px;height:10px;background:#64b5f6"></div><div class="t" style="left:1010.70px;top:552.73px;font-size:14.5px;color:#aaaaaa;-webkit-text-stroke:0.2px #aaaaaa">images</div>
<svg class="abs" style="left:1034.30px;top:572.80px" width="285.20" height="381.00" viewBox="1034.3 572.8 285.20000000000005 381.0"><defs><linearGradient id="bgI" gradientUnits="userSpaceOnUse" x1="1034.3" y1="572.8" x2="1319.5" y2="953.8"><stop offset="0" stop-color="#f0f0f0"/><stop offset="1" stop-color="#e2e2e2"/></linearGradient><filter id="fI" x="0" y="0" width="100%" height="100%"><feTurbulence type="fractalNoise" baseFrequency="0.45 0.32" numOctaves="2" seed="3"/><feColorMatrix type="matrix" values="0 0 0 0 0.92  0 0 0 0 0.97  0 0 0 0 0.9  4.5 0 0 0 -1.95"/></filter><filter id="sI" x="0" y="0" width="100%" height="100%"><feTurbulence type="fractalNoise" baseFrequency="0.04" numOctaves="2" seed="8"/><feColorMatrix type="matrix" values="0 0 0 0 0.92  0 0 0 0 0.97  0 0 0 0 0.9  2.2 0 0 0 -0.85"/></filter><clipPath id="cI"><path d="M1150,670 L1171.4,728.4 L1195,662 C1215,672 1236,686 1248,705 L1256.9,760 L1258.9,873.4 L1234.4,869.5 L1231.5,865.6 L1119.1,867.5 L1111.3,877.3 L1088.8,877.3 L1098.6,760 L1102.5,719 C1110,700 1125,690 1150,670 Z"/></clipPath></defs><rect x="1034.3" y="572.8" width="285.20000000000005" height="381.0" fill="url(#bgI)"/><path d="M1116.2,884 C1140,889 1165,894 1178,894.5 C1200,893 1220,888 1236,880 L1245.2,954 L1116.2,954 Z" fill="#7a513e"/><path d="M1176,912 L1177,954" stroke="#5e3b2c" stroke-width="1.5"/><path d="M1118,866 L1234.4,864 L1229.6,883.2 C1210,890 1190,895 1177.8,894.9 C1150,893 1130,889 1119.1,887 Z" fill="#9b7453"/><path d="M1088.8,876 L1111.3,876 L1111.5,900 L1109.3,930 L1099.5,926 L1090,912 L1087.8,900.8 Z" fill="#d29d85"/><path d="M1234.4,870 L1256,874 L1257,897 L1252,915 L1248,924 L1238,928 L1232,915 L1229.6,900 Z" fill="#d29d85"/><path d="M1156,645 L1190,645 L1194.3,662.7 L1171.4,700 L1151.5,671 Z" fill="#c48c74"/><ellipse cx="1147" cy="626" rx="4" ry="9.5" fill="#d29d85"/><ellipse cx="1201" cy="633" rx="4" ry="8.5" fill="#d29d85"/><path d="M1152,598 L1152.6,625 C1153,640 1155,652 1160,659 C1164,663 1168,665 1171.4,665 C1178,664 1185,660 1190,655 C1194,645 1195.5,635 1195.5,622 L1199,598 Z" fill="#dcab93"/><path d="M1149.4,621 C1148,608 1150,596 1160.9,586 C1166,583 1171,582.4 1177.6,582.4 C1185,583 1191,585 1194.3,587.6 C1200,592 1204,598 1204.7,606 C1205,614 1203,620 1198.5,625 C1197,617 1195,611 1190,607 C1182,604 1172,603 1162,604 C1155,607 1152,614 1152,622 Z" fill="#2b201c"/><path d="M1159,622.6 Q1166.0,621.2 1173,622.4" stroke="#3a2a24" stroke-width="1.6" fill="none" opacity="0.85"/><path d="M1181.5,623.6 Q1187.75,622.2 1194,623.4" stroke="#3a2a24" stroke-width="1.6" fill="none" opacity="0.85"/><ellipse cx="1166" cy="627" rx="3.2" ry="1.5" fill="#2e2420" opacity="0.75"/><ellipse cx="1188" cy="628" rx="3.2" ry="1.5" fill="#2e2420" opacity="0.75"/><path d="M1166,651 Q1172.5,652.2 1179,651" stroke="#b9786a" stroke-width="2" fill="none"/><path d="M1151.5,671 L1171.4,728.4 L1194.3,662.7 L1190,655 L1172,675 L1155,660 Z" fill="#9b7453"/><path d="M1166,690 L1172,700 L1178,690 L1172,684 Z" fill="#6b4a33"/><g clip-path="url(#cI)"><path d="M1150,670 L1171.4,728.4 L1195,662 C1215,672 1236,686 1248,705 L1256.9,760 L1258.9,873.4 L1234.4,869.5 L1231.5,865.6 L1119.1,867.5 L1111.3,877.3 L1088.8,877.3 L1098.6,760 L1102.5,719 C1110,700 1125,690 1150,670 Z" fill="#45a34b"/><rect x="1034.3" y="572.8" width="285.20000000000005" height="381.0" filter="url(#sI)" opacity="0.4"/><rect x="1034.3" y="572.8" width="285.20000000000005" height="381.0" filter="url(#fI)" opacity="0.82"/></g><path d="M1150,670 L1171.4,728.4 L1195,662" stroke="#efe8d6" stroke-width="1.6" fill="none"/><path d="M1113,735 L1113,800 L1112,870 M1233,728 L1234,800 L1234.5,868" stroke="#2d6e33" stroke-width="1.4" fill="none" opacity="0.55"/><path d="M1171.4,728.4 L1170.5,800 L1172.5,867" stroke="#efe8d6" stroke-width="2.2" fill="none"/><circle cx="1172.6" cy="736.7" r="3" fill="#f3eee2" stroke="#cfc6b0" stroke-width="0.6"/><circle cx="1174.2" cy="764.8" r="3" fill="#f3eee2" stroke="#cfc6b0" stroke-width="0.6"/><circle cx="1175" cy="795.5" r="3" fill="#f3eee2" stroke="#cfc6b0" stroke-width="0.6"/><circle cx="1176.5" cy="825.5" r="3" fill="#f3eee2" stroke="#cfc6b0" stroke-width="0.6"/><circle cx="1177.4" cy="856.3" r="3" fill="#f3eee2" stroke="#cfc6b0" stroke-width="0.6"/><path d="M1125,799 L1145.5,800 M1202.2,792.3 L1228.6,794.2" stroke="#efe8d6" stroke-width="1.6" fill="none"/></svg>
</body></html>
